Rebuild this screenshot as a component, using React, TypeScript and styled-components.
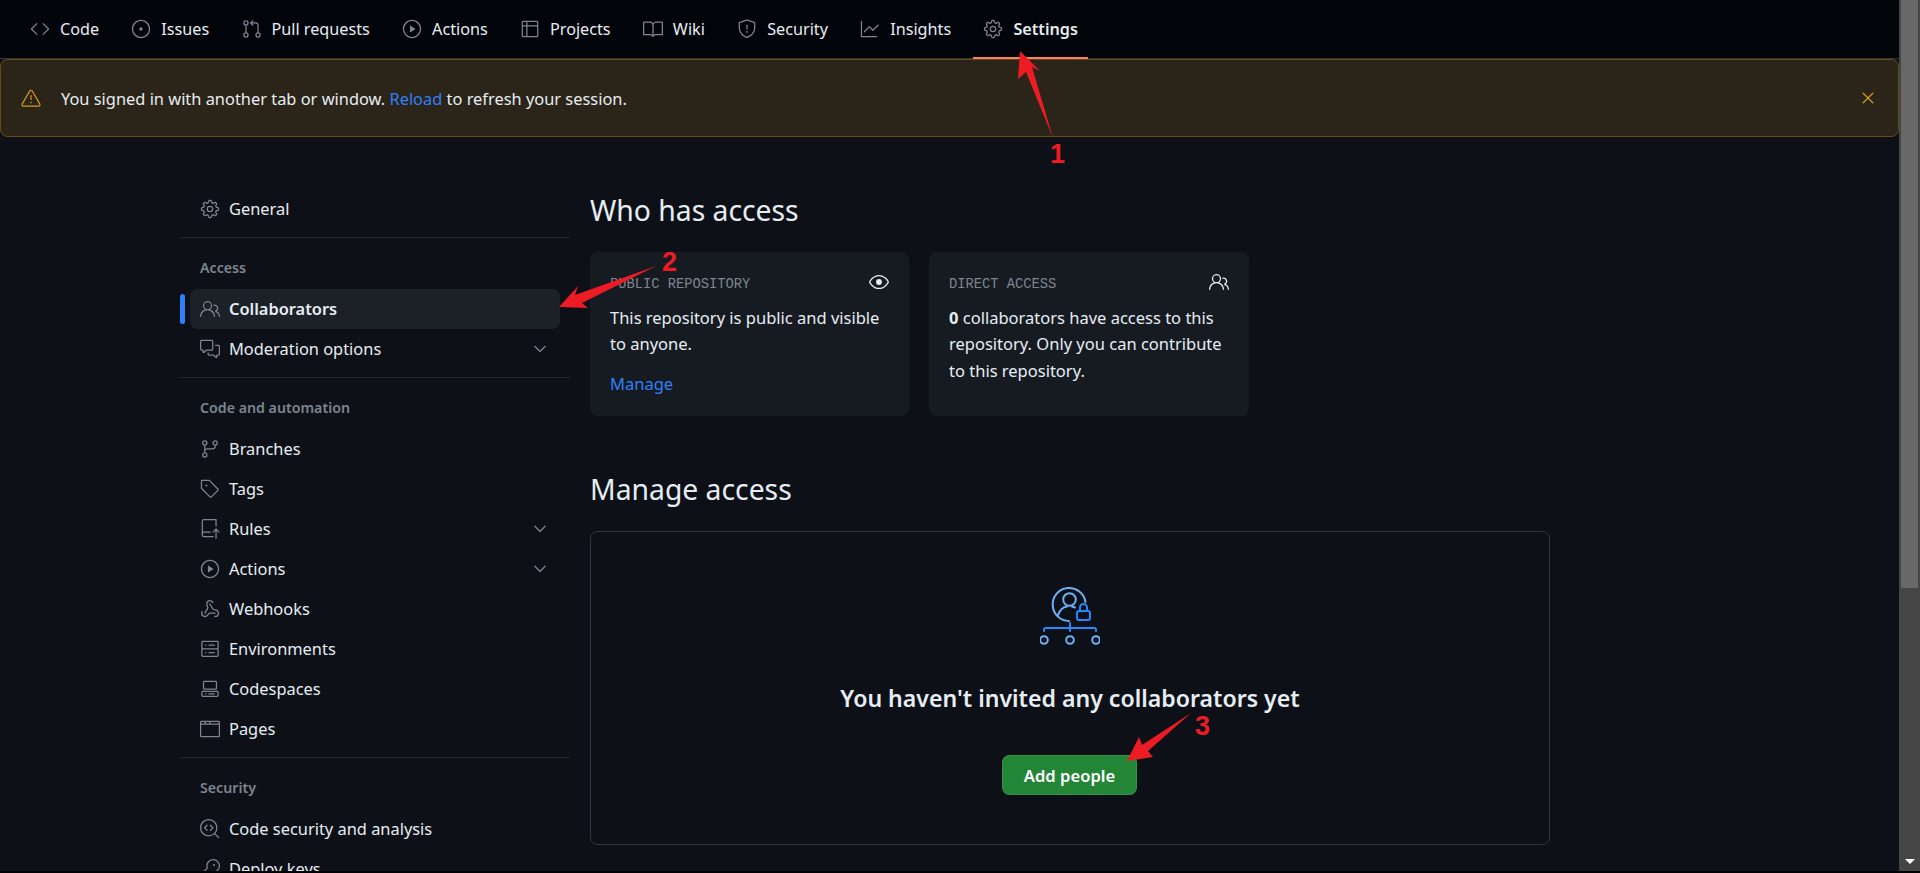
import * as React from "react";
import styled, { createGlobalStyle } from "styled-components";
import { Webhook } from "lucide-react";
import {
  GoAlert,
  GoBook,
  GoBrowser,
  GoChevronDown,
  GoCode,
  GoCodescan,
  GoCodespaces,
  GoCommentDiscussion,
  GoEye,
  GoGear,
  GoGitBranch,
  GoGitPullRequest,
  GoGraph,
  GoIssueOpened,
  GoKey,
  GoPeople,
  GoPlay,
  GoRepoPush,
  GoServer,
  GoShield,
  GoTable,
  GoTag,
  GoX,
} from "react-icons/go";

const FONT = `"Noto Sans", "Open Sans", sans-serif`;

const GlobalStyle = createGlobalStyle`
  html, body {
    margin: 0;
    padding: 0;
    background: #000;
    overflow: hidden;
  }
  * {
    box-sizing: border-box;
  }
`;

const Frame = styled.div`
  position: relative;
  display: flex;
  width: 1920px;
  height: 873px;
  overflow: hidden;
  background: #000;
  font-family: ${FONT};
  color: #e6edf3;
`;

const Viewport = styled.div`
  flex: 1;
  height: 871px;
  overflow: hidden;
  background: #0d1117;
`;

const ScrollBar = styled.div`
  position: relative;
  width: 21px;
  height: 871px;
  padding: 0 2px;
  background: #454545;
`;

const ScrollThumb = styled.div`
  height: 588px;
  background: #686868;
`;

const ScrollArrow = styled.div`
  position: absolute;
  left: 6px;
  bottom: 7px;
  width: 0;
  height: 0;
  border-left: 5px solid transparent;
  border-right: 5px solid transparent;
  border-top: 5px solid #fff;
`;

const TopNav = styled.nav`
  display: flex;
  align-items: center;
  gap: 12.25px;
  height: 59px;
  padding: 0 20px 1px;
  background: #010409;
  border-bottom: 1px solid #30363d;
`;

const NavItem = styled.a<{ $active?: boolean }>`
  position: relative;
  display: flex;
  align-items: center;
  gap: 10px;
  height: 40px;
  padding: 0 10px;
  font-size: 16.2px;
  font-weight: ${(p) => (p.$active ? 600 : 400)};
  color: #e6edf3;
  white-space: nowrap;

  svg {
    color: #7d8590;
  }

  ${(p) =>
    p.$active &&
    `
    &::after {
      content: "";
      position: absolute;
      left: 0;
      right: 0;
      bottom: -10px;
      height: 2px;
      background: #f78166;
    }
  `}
`;

const Banner = styled.div`
  display: flex;
  align-items: center;
  height: 78px;
  padding: 0 20px;
  gap: 20px;
  background: #2b2418;
  border: 1px solid #6a4c13;
  border-radius: 7.5px;
  font-size: 16.4px;
  color: #e6edf3;

  svg {
    color: #d29922;
    flex: none;
  }
`;

const BannerText = styled.div`
  flex: 1;
`;

const TextLink = styled.a`
  color: #2f81f7;
`;

const Content = styled.div`
  display: flex;
  gap: 20px;
  padding: 52px 0 0 180px;
`;

const Sidebar = styled.aside`
  width: 390px;
  flex: none;
  margin-top: -0.5px;
`;

const SideRow = styled.a<{ $active?: boolean }>`
  position: relative;
  display: flex;
  align-items: center;
  gap: 9px;
  height: 40px;
  margin: 0 10px;
  padding: 0 10px;
  border-radius: 7.5px;
  font-size: 16.4px;
  font-weight: ${(p) => (p.$active ? 600 : 400)};
  color: #e6edf3;
  background: ${(p) => (p.$active ? "#1c2128" : "transparent")};

  svg {
    color: #7d8590;
    flex: none;
  }

  ${(p) =>
    p.$active &&
    `
    &::before {
      content: "";
      position: absolute;
      left: -10px;
      top: 5px;
      width: 5px;
      height: 30px;
      border-radius: 5px;
      background: #2f81f7;
    }
  `}
`;

const RowLabel = styled.span`
  flex: 1;
`;

const Divider = styled.div`
  height: 1px;
  margin-top: 8.5px;
  background: #21262d;
`;

const GroupLabel = styled.div`
  padding: 19.5px 20px 11px 20px;
  font-size: 14.2px;
  line-height: 20px;
  font-weight: 600;
  color: #7d8590;
`;

const Main = styled.main`
  width: 960px;
  flex: none;
`;

const Heading = styled.h2`
  margin: 0;
  height: 44px;
  font-size: 28.3px;
  line-height: 43px;
  font-weight: 400;
  color: #e6edf3;
`;

const CardRow = styled.div`
  display: grid;
  grid-template-columns: 319px 320px;
  gap: 20px;
  margin: 19px 0 52px;
`;

const Card = styled.div`
  height: 164px;
  padding: 19px 20px 20px;
  border-radius: 7.5px;
  background: #161b22;
`;

const CardHead = styled.div`
  display: flex;
  align-items: center;
  justify-content: space-between;
  height: 22px;
  margin-bottom: 12px;

  svg {
    color: #e6edf3;
  }
`;

const CardLabel = styled.span`
  padding-top: 5px;
  font-family: "Liberation Mono", monospace;
  font-size: 13.75px;
  color: #7d8590;
`;

const CardText = styled.p`
  margin: 0;
  font-size: 16.5px;
  line-height: 26.25px;
  color: #e6edf3;
`;

const CardLink = styled(TextLink)`
  display: block;
  margin-top: 13px;
  font-size: 16.5px;
  line-height: 26px;
`;

const Blankslate = styled.div`
  display: flex;
  flex-direction: column;
  align-items: center;
  height: 314px;
  margin-top: 19px;
  padding-top: 52px;
  border: 1px solid #30363d;
  border-radius: 7.5px;
`;

const BlankTitle = styled.h3`
  margin: 30px 0 0;
  font-size: 23.1px;
  line-height: 36px;
  font-weight: 600;
  color: #e6edf3;
`;

const PrimaryButton = styled.button`
  width: 135px;
  height: 40px;
  margin: 39px 1px 0 0;
  border: 1px solid rgba(240, 246, 252, 0.1);
  border-radius: 7.5px;
  background: #238636;
  font-family: ${FONT};
  font-size: 16.6px;
  font-weight: 600;
  color: #fff;
`;

const Overlay = styled.svg`
  position: absolute;
  left: 0;
  top: 0;
  pointer-events: none;
`;

const Marker = styled.span<{ $x: number; $y: number }>`
  position: absolute;
  left: ${(p) => p.$x}px;
  top: ${(p) => p.$y}px;
  font-family: "Liberation Sans", Arial, sans-serif;
  font-size: 27px;
  line-height: 27px;
  font-weight: 700;
  color: #ed1c24;
`;

const AccessIcon: React.FC = () => (
  <svg width="60" height="66" viewBox="0 0 60 66" fill="none" strokeWidth="2">
    <path d="M29 37 A16.5 16.5 0 1 1 45.5 18" stroke="#6cb0f5" strokeLinecap="round" />
    <circle cx="29.5" cy="15.5" r="6.3" stroke="#6cb0f5" />
    <path d="M18 31 C20 25 24 23 27 22.5 M32 22.5 L35 23.5" stroke="#6cb0f5" strokeLinecap="round" />
    <rect x="37" y="27" width="13" height="9" rx="2" stroke="#2188ff" />
    <path d="M40 27 V23.5 A3.5 3.5 0 0 1 47 23.5 V27" stroke="#2188ff" />
    <path
      d="M4 47 V45.5 A1.5 1.5 0 0 1 5.5 44 H54.5 A1.5 1.5 0 0 1 56 45.5 V47 M30 39 V47"
      stroke="#2188ff"
      strokeLinecap="round"
    />
    <circle cx="4" cy="56" r="3.8" stroke="#6cb0f5" />
    <circle cx="30" cy="56" r="3.8" stroke="#6cb0f5" />
    <circle cx="56" cy="56" r="3.8" stroke="#6cb0f5" />
  </svg>
);

const navItems = [
  { label: "Code", icon: GoCode },
  { label: "Issues", icon: GoIssueOpened },
  { label: "Pull requests", icon: GoGitPullRequest },
  { label: "Actions", icon: GoPlay },
  { label: "Projects", icon: GoTable },
  { label: "Wiki", icon: GoBook },
  { label: "Security", icon: GoShield },
  { label: "Insights", icon: GoGraph },
  { label: "Settings", icon: GoGear, active: true },
];

const sideGroups = [
  {
    rows: [{ label: "General", icon: GoGear }],
  },
  {
    title: "Access",
    rows: [
      { label: "Collaborators", icon: GoPeople, active: true },
      { label: "Moderation options", icon: GoCommentDiscussion, more: true },
    ],
  },
  {
    title: "Code and automation",
    rows: [
      { label: "Branches", icon: GoGitBranch },
      { label: "Tags", icon: GoTag },
      { label: "Rules", icon: GoRepoPush, more: true },
      { label: "Actions", icon: GoPlay, more: true },
      { label: "Webhooks", icon: Webhook, thin: true },
      { label: "Environments", icon: GoServer },
      { label: "Codespaces", icon: GoCodespaces },
      { label: "Pages", icon: GoBrowser },
    ],
  },
  {
    title: "Security",
    rows: [
      { label: "Code security and analysis", icon: GoCodescan },
      { label: "Deploy keys", icon: GoKey },
    ],
  },
];

const App: React.FC = () => {
  return (
    <Frame>
      <GlobalStyle />
      <Viewport>
        <TopNav>
          {navItems.map((item) => (
            <NavItem key={item.label} $active={item.active}>
              <item.icon size={20} />
              {item.label}
            </NavItem>
          ))}
        </TopNav>
        <Banner>
          <GoAlert size={20} />
          <BannerText>
            You signed in with another tab or window. <TextLink>Reload</TextLink> to refresh your session.
          </BannerText>
          <GoX size={20} />
        </Banner>
        <Content>
          <Sidebar>
            {sideGroups.map((group, i) => (
              <React.Fragment key={i}>
                {i > 0 && <Divider />}
                {group.title && <GroupLabel>{group.title}</GroupLabel>}
                {group.rows.map((row: any) => (
                  <SideRow key={row.label} $active={row.active}>
                    <row.icon size={20} {...(row.thin ? { strokeWidth: 1.6 } : {})} />
                    <RowLabel>{row.label}</RowLabel>
                    {row.more && <GoChevronDown size={20} />}
                  </SideRow>
                ))}
              </React.Fragment>
            ))}
          </Sidebar>
          <Main>
            <Heading>Who has access</Heading>
            <CardRow>
              <Card>
                <CardHead>
                  <CardLabel>PUBLIC REPOSITORY</CardLabel>
                  <GoEye size={20} />
                </CardHead>
                <CardText>This repository is public and visible to anyone.</CardText>
                <CardLink>Manage</CardLink>
              </Card>
              <Card>
                <CardHead>
                  <CardLabel>DIRECT ACCESS</CardLabel>
                  <GoPeople size={20} />
                </CardHead>
                <CardText>
                  <strong>0</strong> collaborators have access to this repository. Only you can contribute to this
                  repository.
                </CardText>
              </Card>
            </CardRow>
            <Heading>Manage access</Heading>
            <Blankslate>
              <AccessIcon />
              <BlankTitle>You haven't invited any collaborators yet</BlankTitle>
              <PrimaryButton>Add people</PrimaryButton>
            </Blankslate>
          </Main>
        </Content>
      </Viewport>
      <ScrollBar>
        <ScrollThumb />
        <ScrollArrow />
      </ScrollBar>
      <Overlay width="1920" height="873" viewBox="0 0 1920 873">
        <polygon points="1020,51 1040,71 1032,67 1053,138 1026,72 1018,79" fill="#ed1c24" />
        <polygon points="559,307 578,286 575,295 656,266 582,303 588,308" fill="#ed1c24" />
        <polygon points="1127,761 1139,737 1142,745 1191,713 1148,751 1153,757" fill="#ed1c24" />
      </Overlay>
      <Marker $x={1050} $y={141}>1</Marker>
      <Marker $x={662} $y={249}>2</Marker>
      <Marker $x={1195} $y={713}>3</Marker>
    </Frame>
  );
};

export default App;
